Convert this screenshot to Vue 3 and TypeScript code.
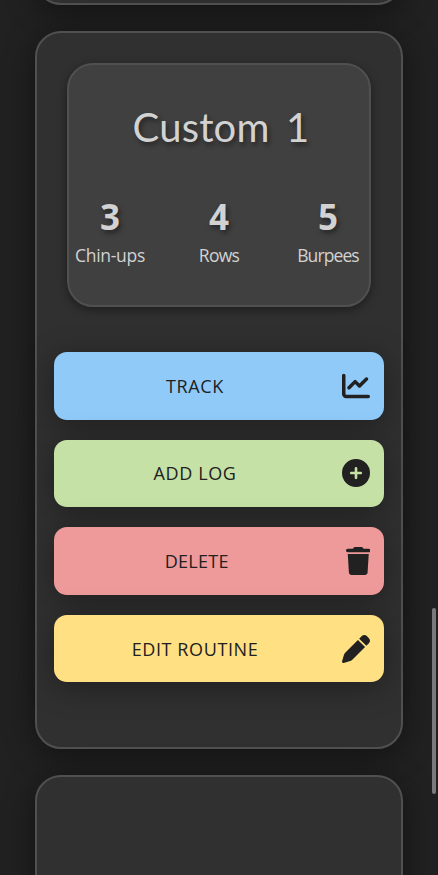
<script setup lang="ts">
interface Exercise {
  reps: number
  name: string
  cls: string
}
interface Action {
  label: string
  cls: string
  width: number
  path: string
}

const exercises: Exercise[] = [
  { reps: 3, name: 'Chin-ups', cls: 'chin' },
  { reps: 4, name: 'Rows', cls: 'rows' },
  { reps: 5, name: 'Burpees', cls: 'burpees' },
]

const actions: Action[] = [
  {
    label: 'TRACK',
    cls: 'track',
    width: 512,
    path: 'M64 64c0-17.7-14.3-32-32-32S0 46.3 0 64V400c0 44.2 35.8 80 80 80H480c17.7 0 32-14.3 32-32s-14.3-32-32-32H80c-8.8 0-16-7.2-16-16V64zm406.600 86.600c12.500-12.500 12.500-32.800 0-45.300s-32.800-12.500-45.300 0L320 210.700l-57.400-57.400c-12.500-12.500-32.800-12.500-45.300 0l-112 112c-12.500 12.500-12.500 32.800 0 45.300s32.800 12.500 45.300 0L240 221.300l57.400 57.400c12.500 12.500 32.800 12.500 45.300 0l128-128z',
  },
  {
    label: 'ADD LOG',
    cls: 'add',
    width: 512,
    path: 'M256 512A256 256 0 1 0 256 0a256 256 0 1 0 0 512zM232 344V280H168c-13.3 0-24-10.7-24-24s10.7-24 24-24h64V168c0-13.3 10.7-24 24-24s24 10.7 24 24v64h64c13.3 0 24 10.7 24 24s-10.7 24-24 24H280v64c0 13.3-10.7 24-24 24s-24-10.7-24-24z',
  },
  {
    label: 'DELETE',
    cls: 'delete',
    width: 448,
    path: 'M135.2 17.7L128 32H32C14.3 32 0 46.3 0 64S14.3 96 32 96H416c17.7 0 32-14.3 32-32s-14.3-32-32-32H320l-7.2-14.3C307.4 6.8 296.3 0 284.2 0H163.8c-12.1 0-23.2 6.8-28.6 17.7zM416 128H32L53.2 467c1.6 25.3 22.6 45 47.9 45H346.9c25.3 0 46.3-19.7 47.9-45L416 128z',
  },
  {
    label: 'EDIT ROUTINE',
    cls: 'edit',
    width: 512,
    path: 'M362.7 19.3L314.3 67.7 444.3 197.7l48.4-48.4c25-25 25-65.5 0-90.5L453.3 19.3c-25-25-65.5-25-90.5 0zm-71 71L58.6 323.5c-10.4 10.4-18 23.3-22.2 37.4L1 481.2C-1.5 489.7 .8 498.8 7 505s15.3 8.5 23.7 6.1l120.3-35.4c14.1-4.2 27-11.8 37.4-22.2L421.7 220.3 291.7 90.3z',
  },
]
</script>

<template>
  <main class="page">
    <section class="card previous"></section>
    <section class="card routine">
      <header class="summary">
        <h2 class="title">Custom 1</h2>
        <div class="exercises">
          <div v-for="e in exercises" :key="e.name" class="exercise" :class="e.cls">
            <span class="reps">{{ e.reps }}</span>
            <span class="name">{{ e.name }}</span>
          </div>
        </div>
      </header>
      <div class="actions">
        <button v-for="a in actions" :key="a.label" class="action" :class="a.cls" type="button">
          <span class="label">{{ a.label }}</span>
          <svg class="icon" :viewBox="`0 0 ${a.width} 512`" aria-hidden="true">
            <path :d="a.path" />
          </svg>
        </button>
      </div>
    </section>
    <section class="card next"></section>
    <div class="scroll-thumb"></div>
  </main>
</template>

<style>
body {
  background: #212121;
  overflow: hidden;
}
</style>

<style scoped>
.page {
  position: relative;
  box-sizing: border-box;
  height: 875px;
  overflow: hidden;
  display: flex;
  flex-direction: column;
  align-items: center;
  gap: 26px;
  background: #212121;
  font-family: 'Open Sans', 'Noto Sans', sans-serif;
}
.card {
  box-sizing: border-box;
  flex: none;
  width: 368px;
  border: 2px solid #505050;
  border-radius: 26px;
  background: #303030;
  box-shadow: 0 5px 32px rgba(0, 0, 0, 0.45);
}
.previous {
  height: 300px;
  margin-top: -295px;
}
.routine {
  height: 718px;
  display: flex;
  flex-direction: column;
  align-items: center;
  padding-top: 30px;
}
.next {
  height: 718px;
}
.summary {
  box-sizing: border-box;
  flex: none;
  width: 304px;
  height: 244px;
  border: 2px solid #505050;
  border-radius: 26px;
  background: #404040;
  box-shadow: 0 3px 10px rgba(0, 0, 0, 0.4);
  color: #d2d2d2;
  padding-top: 34px;
}
.title {
  margin: 0;
  padding-left: 4px;
  font-family: Lato, 'Open Sans', sans-serif;
  font-size: 40px;
  font-weight: 400;
  line-height: 56px;
  letter-spacing: 0.2px;
  word-spacing: 6px;
  text-align: center;
  text-shadow: 2px 3px 5px rgba(0, 0, 0, 0.45);
}
.exercises {
  display: grid;
  grid-template-columns: repeat(3, 70px);
  justify-content: center;
  column-gap: 39px;
  margin-top: 38px;
}
.exercise {
  display: flex;
  flex-direction: column;
  align-items: center;
  white-space: nowrap;
}
.reps {
  font-size: 35px;
  font-weight: 700;
  line-height: 48px;
  text-shadow: 2px 3px 5px rgba(0, 0, 0, 0.45);
}
.name {
  font-size: 17.500px;
  line-height: 28px;
  letter-spacing: -0.3px;
}
.rows .name {
  letter-spacing: -0.7px;
}
.burpees .name {
  letter-spacing: -0.9px;
}
.actions {
  display: flex;
  flex-direction: column;
  gap: 20px;
  width: 330px;
  margin-top: 45px;
}
.action {
  display: flex;
  align-items: center;
  gap: 20px;
  width: 330px;
  height: 67.600px;
  padding: 0 14px;
  border: 0;
  border-radius: 13px;
  box-shadow: 0 5px 30px rgba(0, 0, 0, 0.35);
  color: #212121;
  font-family: inherit;
}
.track {
  background: #90caf9;
}
.add {
  background: #c5e1a5;
}
.delete {
  background: #ef9a9a;
}
.edit {
  background: #ffe082;
}
.label {
  flex: 1;
  text-align: center;
  font-size: 18px;
  line-height: 26px;
  letter-spacing: 0.6px;
  white-space: nowrap;
}
.delete .label {
  letter-spacing: 0.3px;
}
.icon {
  flex: none;
  height: 28px;
  fill: currentColor;
}
.scroll-thumb {
  position: absolute;
  top: 608px;
  right: 2px;
  width: 4px;
  height: 186px;
  border-radius: 2px;
  background: #7a7a7a;
}
</style>
